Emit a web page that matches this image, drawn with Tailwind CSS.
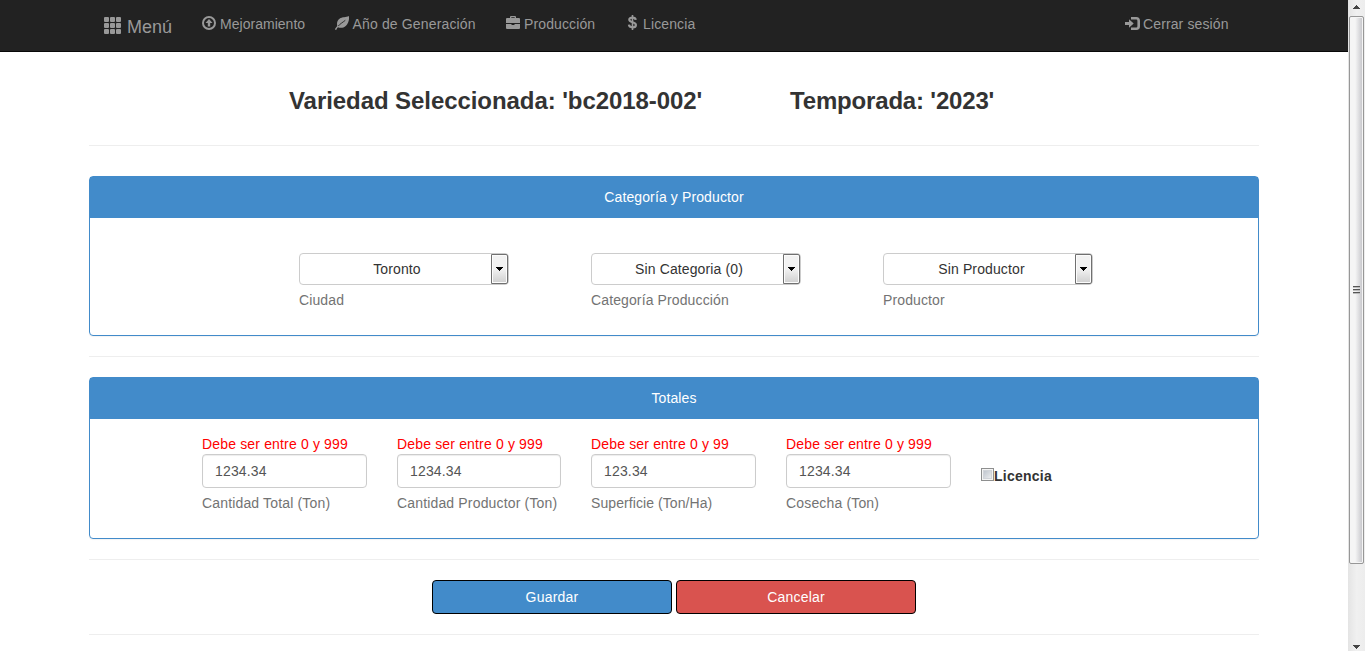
<!DOCTYPE html>
<html lang="es">
<head>
<meta charset="utf-8">
<title>Producción</title>
<script src="https://cdn.jsdelivr.net/npm/@tailwindcss/browser@4"></script>
</head>
<body class="flex h-[651px] overflow-hidden bg-white font-['Liberation_Sans',Arial,sans-serif] text-sm leading-5 tracking-[0.12px] text-[#333]">
<div class="w-[1348px] shrink-0">
  <nav class="h-[52px] border-b border-[#080808] bg-[#222] text-[#999]">
    <div class="flex h-[51px] items-start pl-[104px] whitespace-nowrap">
      <a class="flex w-[98px] items-start gap-[5px] pt-[17px] text-lg leading-5 tracking-normal">
        <svg class="h-[17px] w-[18px] shrink-0" viewBox="0 0 18 17" fill="currentColor"><rect x="0" y="0" width="5" height="5" rx="1"/><rect x="6" y="0" width="5" height="5" rx="1"/><rect x="12" y="0" width="5" height="5" rx="1"/><rect x="0" y="6" width="5" height="5" rx="1"/><rect x="6" y="6" width="5" height="5" rx="1"/><rect x="12" y="6" width="5" height="5" rx="1"/><rect x="0" y="12" width="5" height="5" rx="1"/><rect x="6" y="12" width="5" height="5" rx="1"/><rect x="12" y="12" width="5" height="5" rx="1"/></svg>
        <span>Menú</span>
      </a>
      <a class="flex w-[133px] gap-[4px] pt-[14px] tracking-[0.03px]">
        <svg class="mt-[2px] size-[14px] shrink-0" viewBox="0 0 14 14" fill="currentColor"><circle cx="7" cy="7" r="6" fill="none" stroke="currentColor" stroke-width="2"/><path d="M7 3 10.500 7H8.200v3.600H5.800V7H3.500z"/></svg>
        <span>Mejoramiento</span>
      </a>
      <a class="flex w-[171px] gap-[3.500px] pt-[14px] tracking-[0.15px]">
        <svg class="mt-[2px] size-[14px] shrink-0" viewBox="0 0 14 14" fill="currentColor"><path d="M13.800 0C14.500 3.500 13.600 7.300 11 9.700 8.500 12 5.500 12.300 3 11.300 1.200 8.500 1.800 5 4.500 2.800 7.300.6 11 1.500 13.800 0Z"/><path d="M3 10.300C4.800 8 7.500 6.600 10.300 4.300" fill="none" stroke="#222" stroke-width=".9"/><path d="M.5 13.700C1.100 12.300 1.900 11.200 3.300 10" fill="none" stroke="currentColor" stroke-width="1.500"/></svg>
        <span>Año de Generación</span>
      </a>
      <a class="flex w-[120px] gap-[4px] pt-[14px]">
        <svg class="mt-[2px] size-[14px] shrink-0" viewBox="0 0 14 14" fill="currentColor"><path d="M4 2V1Q4 0 5 0h4Q10 0 10 1V2h3q1 0 1 1v4H0V3q0-1 1-1ZM5.300 2h3.400V1.200H5.300ZM0 8h5.500v1h3V8H14v4q0 1-1 1H1q-1 0-1-1Z"/></svg>
        <span>Producción</span>
      </a>
      <a class="flex w-[499px] gap-[4px] pt-[14px]">
        <svg class="mt-[1px] h-[15px] w-[13px] shrink-0" viewBox="0 0 13 15" fill="none" stroke="currentColor" stroke-width="2.200"><path d="M9.700 4.800C9.500 3.300 8.500 2.600 6.500 2.600 4.500 2.600 3.300 3.400 3.300 4.800 3.300 8 9.900 6.400 9.900 9.900 9.900 11.500 8.700 12.300 6.500 12.300 4.200 12.300 3.100 11.400 2.900 9.700"/><path d="M6.500 0v15" stroke-width="1.600"/></svg>
        <span>Licencia</span>
      </a>
      <a class="flex gap-[3px] pt-[14px]">
        <svg class="mt-[3px] h-[13px] w-[15px] shrink-0" viewBox="0 0 15 13" fill="currentColor"><path d="M0 5h4V2.200l4.700 4.300L4 10.800V8H0z"/><path d="M6 1.300h5.200Q13.700 1.300 13.700 3.800v5.400Q13.700 11.700 11.200 11.700H6" fill="none" stroke="currentColor" stroke-width="2.600"/></svg>
        <span>Cerrar sesión</span>
      </a>
    </div>
  </nav>

  <main class="mx-auto w-[1170px]">
    <div class="flex h-[93px] pt-[36px] pl-[200px] text-2xl leading-[26px] font-bold whitespace-nowrap">
      <h3 class="w-[501px] tracking-[-0.07px]">Variedad Seleccionada: 'bc2018-002'</h3>
      <h3 class="tracking-[-0.17px]">Temporada: '2023'</h3>
    </div>
    <hr class="border-[#eee]">

    <section class="mt-[30px] h-[160px] rounded border border-[#428bca] shadow-[0_1px_1px_rgba(0,0,0,.05)]">
      <h4 class="h-[41px] bg-[#428bca] pt-[10px] text-center text-white">Categoría y Productor</h4>
      <div class="flex gap-[82px] pt-[35px] pl-[209px]">
        <div class="w-[210px]">
          <div class="flex h-8 rounded border border-[#ccc]">
            <span class="flex-1 pt-[5px] pl-[3px] text-center">Toronto</span>
            <span class="flex w-[17px] items-center justify-center rounded-r-[2px] border border-[#707070] bg-linear-to-b from-[#f2f2f2] from-50% to-[#cfcfcf] shadow-[inset_0_0_0_1px_#fcfcfc]"><svg class="h-1 w-[7px]" viewBox="0 0 7 4" shape-rendering="crispEdges"><path d="M0 0h7v1H6v1H5v1H4v1H3V3H2V2H1V1H0z"/></svg></span>
          </div>
          <p class="mt-[5px] text-[#737373]">Ciudad</p>
        </div>
        <div class="w-[210px]">
          <div class="flex h-8 rounded border border-[#ccc]">
            <span class="flex-1 pt-[5px] pl-[3px] text-center">Sin Categoria (0)</span>
            <span class="flex w-[17px] items-center justify-center rounded-r-[2px] border border-[#707070] bg-linear-to-b from-[#f2f2f2] from-50% to-[#cfcfcf] shadow-[inset_0_0_0_1px_#fcfcfc]"><svg class="h-1 w-[7px]" viewBox="0 0 7 4" shape-rendering="crispEdges"><path d="M0 0h7v1H6v1H5v1H4v1H3V3H2V2H1V1H0z"/></svg></span>
          </div>
          <p class="mt-[5px] text-[#737373]">Categoría Producción</p>
        </div>
        <div class="w-[210px]">
          <div class="flex h-8 rounded border border-[#ccc]">
            <span class="flex-1 pt-[5px] pl-[4px] text-center">Sin Productor</span>
            <span class="flex w-[17px] items-center justify-center rounded-r-[2px] border border-[#707070] bg-linear-to-b from-[#f2f2f2] from-50% to-[#cfcfcf] shadow-[inset_0_0_0_1px_#fcfcfc]"><svg class="h-1 w-[7px]" viewBox="0 0 7 4" shape-rendering="crispEdges"><path d="M0 0h7v1H6v1H5v1H4v1H3V3H2V2H1V1H0z"/></svg></span>
          </div>
          <p class="mt-[5px] text-[#737373]">Productor</p>
        </div>
      </div>
    </section>
    <hr class="mt-5 border-[#eee]">

    <section class="mt-5 h-[162px] rounded border border-[#428bca] shadow-[0_1px_1px_rgba(0,0,0,.05)]">
      <h4 class="h-[41px] bg-[#428bca] pt-[10px] text-center text-white">Totales</h4>
      <div class="flex gap-[30px] pt-[15px] pl-[112px] tracking-[0.16px] whitespace-nowrap">
        <div class="w-[165px]">
          <p class="text-[#f00]">Debe ser entre 0 y 999</p>
          <div class="h-[34px] rounded border border-[#ccc] px-3 py-1.5 text-[#555] shadow-[inset_0_1px_1px_rgba(0,0,0,.075)]">1234.34</div>
          <p class="mt-[5px] text-[#737373]">Cantidad Total (Ton)</p>
        </div>
        <div class="w-[164px]">
          <p class="text-[#f00]">Debe ser entre 0 y 999</p>
          <div class="h-[34px] rounded border border-[#ccc] px-3 py-1.5 text-[#555] shadow-[inset_0_1px_1px_rgba(0,0,0,.075)]">1234.34</div>
          <p class="mt-[5px] text-[#737373]">Cantidad Productor (Ton)</p>
        </div>
        <div class="w-[165px]">
          <p class="text-[#f00]">Debe ser entre 0 y 99</p>
          <div class="h-[34px] rounded border border-[#ccc] px-3 py-1.5 text-[#555] shadow-[inset_0_1px_1px_rgba(0,0,0,.075)]">123.34</div>
          <p class="mt-[5px] tracking-[0.08px] text-[#737373]">Superficie (Ton/Ha)</p>
        </div>
        <div class="w-[165px]">
          <p class="text-[#f00]">Debe ser entre 0 y 999</p>
          <div class="h-[34px] rounded border border-[#ccc] px-3 py-1.5 text-[#555] shadow-[inset_0_1px_1px_rgba(0,0,0,.075)]">1234.34</div>
          <p class="mt-[5px] text-[#737373]">Cosecha (Ton)</p>
        </div>
        <label class="flex items-start pt-[32px] font-bold tracking-[0.25px]"><span class="mt-[2px] size-[13px] border border-[#8e8f8f] bg-linear-to-br from-[#b5bcc6] to-[#f6f6f6] shadow-[inset_0_0_0_1px_#f4f4f4,inset_0_0_0_2px_#d0d3d8]"></span>Licencia</label>
      </div>
    </section>
    <hr class="mt-5 border-[#eee]">

    <div class="mt-5 flex justify-center gap-1 text-white">
      <button class="h-[34px] w-[240px] rounded border border-black bg-[#428bca] tracking-[0.2px]">Guardar</button>
      <button class="h-[34px] w-[240px] rounded border border-black bg-[#d9534f] tracking-[0.2px]">Cancelar</button>
    </div>
    <hr class="mt-5 border-[#eee]">
  </main>
</div>

<aside class="flex w-[17px] shrink-0 flex-col items-center bg-linear-to-r from-[#e4e4e4] via-[#f0f0f0] to-[#ededed]">
  <div class="flex h-4 items-center pb-[3px]"><svg class="h-1 w-[7px]" viewBox="0 0 7 4" shape-rendering="crispEdges" fill="#444"><path d="M3 0h1v1h1v1h1v1h1v1H0V3h1V2h1V1h1z"/></svg></div>
  <div class="flex h-[548px] w-[15px] items-center justify-center rounded-[2px] border border-[#979797] bg-linear-to-r from-[#f5f5f5] from-40% to-[#c3c3c8] pr-px shadow-[inset_0_0_0_1px_#f5f5f5]">
    <svg class="h-2 w-[7px]" viewBox="0 0 7 8" shape-rendering="crispEdges"><path d="M0 0h7v1H0zM0 3h7v1H0zM0 6h7v1H0z" fill="#555"/><path d="M0 1h7v1H0zM0 4h7v1H0zM0 7h7v1H0z" fill="#bbb"/></svg>
  </div>
  <div class="flex flex-1 items-end pb-[2px]"><svg class="h-1 w-[7px]" viewBox="0 0 7 4" shape-rendering="crispEdges" fill="#444"><path d="M0 0h7v1H6v1H5v1H4v1H3V3H2V2H1V1H0z"/></svg></div>
</aside>
</body>
</html>
